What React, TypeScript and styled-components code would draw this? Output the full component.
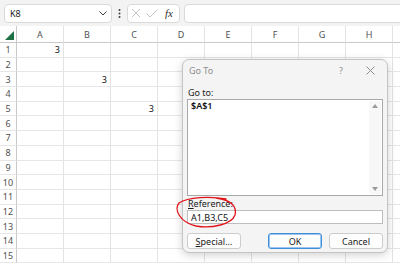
import React from 'react'
import styled, { createGlobalStyle, css } from 'styled-components'

const FONT = `'Noto Sans', 'Open Sans', 'Liberation Sans', sans-serif`
const COLUMNS = ['A', 'B', 'C', 'D', 'E', 'F', 'G', 'H', '']
const ROW_COUNT = 15
const VALUES: Record<string, string> = { '1-0': '3', '3-1': '3', '5-2': '3' }

const GlobalStyle = createGlobalStyle`
  html, body {
    margin: 0;
    padding: 0;
    width: 400px;
    height: 265px;
    overflow: hidden;
    background: #ffffff;
  }
  * {
    box-sizing: border-box;
  }
`

const Window = styled.div`
  position: relative;
  width: 400px;
  height: 265px;
  overflow: hidden;
  display: flex;
  flex-direction: column;
  font-family: ${FONT};
  background: #ffffff;
`

const Toolbar = styled.div`
  height: 26px;
  flex: none;
  display: flex;
  align-items: center;
  padding-left: 4px;
  background: #f3f3f3;
`

const boxLook = css`
  height: 19px;
  background: #ffffff;
  border: 1px solid #dadada;
  border-radius: 4px;
`

const NameBox = styled.div`
  ${boxLook};
  width: 108px;
  display: flex;
  align-items: center;
  justify-content: space-between;
  padding: 0 4px 0 5px;
  font-size: 9px;
  color: #202020;
`

const Dots = styled.div`
  width: 15px;
  display: flex;
  justify-content: center;
`

const FxGroup = styled.div`
  ${boxLook};
  width: 53px;
  display: flex;
  align-items: center;
  gap: 5px;
  padding-left: 3px;
`

const Fx = styled.span`
  font-family: 'Liberation Serif', 'DejaVu Serif', serif;
  font-style: italic;
  font-size: 11px;
  color: #303030;
  margin-left: 2px;
`

const FormulaInput = styled.div`
  ${boxLook};
  flex: 1;
  margin-left: 4px;
  margin-right: -6px;
`

const Sheet = styled.div`
  display: grid;
  grid-template-columns: 17px repeat(9, 47px);
  grid-template-rows: 17px;
  grid-auto-rows: 14.7px;
`

const HeaderCell = styled.div<{ $corner?: boolean }>`
  display: flex;
  align-items: center;
  justify-content: center;
  font-size: 9px;
  color: #505050;
  background: #ffffff;
  border-bottom: 1px solid #c9c9c9;
  border-right: 1px solid ${(p) => (p.$corner ? '#c9c9c9' : '#e3e3e3')};
`

const RowHead = styled.div`
  display: flex;
  align-items: center;
  justify-content: center;
  font-size: 9px;
  color: #505050;
  border-right: 1px solid #c9c9c9;
  border-bottom: 1px solid #e6e6e6;
`

const Cell = styled.div`
  display: flex;
  align-items: center;
  justify-content: flex-end;
  padding-right: 3px;
  font-size: 9px;
  color: #111111;
  border-right: 1px solid #e3e3e3;
  border-bottom: 1px solid #e6e6e6;
`

const Dialog = styled.div`
  position: absolute;
  left: 182px;
  top: 59px;
  width: 206px;
  height: 194px;
  background: #f4f4f4;
  border: 1px solid #c4c4c4;
  border-radius: 7px;
  box-shadow: 0 2px 8px rgba(0, 0, 0, 0.18);
  display: flex;
  flex-direction: column;
  padding: 0 4px;
`

const TitleBar = styled.div`
  height: 21px;
  display: flex;
  align-items: center;
  padding-left: 2px;
  font-size: 9px;
  color: #8c8c8c;
`

const Title = styled.span`
  flex: 1;
`

const Help = styled.span`
  width: 18px;
  text-align: center;
  margin-right: 16px;
`

const Label = styled.div<{ $gap: number }>`
  font-size: 9px;
  color: #1b1b1b;
  height: 12px;
  line-height: 12px;
  padding-left: 1px;
  margin-top: ${(p) => p.$gap}px;
`

const ListBox = styled.div`
  height: 97px;
  background: #ffffff;
  border: 1px solid #a9a9a9;
  display: flex;
  padding: 1px 1px 1px 3px;
  font-size: 9px;
  color: #111111;
`

const ListText = styled.div`
  flex: 1;
  font-weight: 600;
  line-height: 10px;
`

const ScrollTrack = styled.div`
  width: 12px;
  display: flex;
  flex-direction: column;
  justify-content: space-between;
  align-items: center;
  padding: 3px 0;
  background: #f7f7f7;
`

const Arrow = styled.div<{ $down?: boolean }>`
  width: 0;
  height: 0;
  border-left: 3px solid transparent;
  border-right: 3px solid transparent;
  ${(p) =>
    p.$down
      ? 'border-top: 4px solid #9a9a9a;'
      : 'border-bottom: 4px solid #9a9a9a;'}
`

const TextInput = styled.div`
  height: 14px;
  background: #ffffff;
  border: 1px solid #bdbdbd;
  display: flex;
  align-items: center;
  padding-left: 3px;
  font-size: 9px;
  color: #111111;
`

const ButtonRow = styled.div`
  margin-top: 9px;
  display: flex;
  gap: 7px;
`

const Button = styled.div<{ $primary?: boolean; $push?: boolean }>`
  width: 54px;
  height: 16px;
  display: flex;
  align-items: center;
  justify-content: center;
  font-size: 9px;
  color: #1b1b1b;
  background: #fdfdfd;
  border: 1px solid ${(p) => (p.$primary ? '#3f8fd8' : '#cdcdcd')};
  box-shadow: ${(p) => (p.$primary ? 'inset 0 0 0 1px #9cc6ee' : 'none')};
  border-radius: 3px;
  margin-left: ${(p) => (p.$push ? '20px' : '0')};
`

const Underlined = styled.span`
  text-decoration: underline;
  text-underline-offset: 1px;
`

const Scribble = styled.svg`
  position: absolute;
  left: 174px;
  top: 194px;
  width: 66px;
  height: 36px;
  overflow: visible;
`

const Chevron = () => (
  <svg width='8' height='5' viewBox='0 0 8 5'>
    <path d='M0.5 0.5 L4 4 L7.5 0.5' fill='none' stroke='#404040' strokeWidth='1' />
  </svg>
)

const App = () => {
  const rows = Array.from({ length: ROW_COUNT }, (_, i) => i + 1)

  return (
    <Window>
      <GlobalStyle />
      <Toolbar>
        <NameBox>
          <span>K8</span>
          <Chevron />
        </NameBox>
        <Dots>
          <svg width='3' height='9' viewBox='0 0 3 9'>
            <circle cx='1.5' cy='1' r='1' fill='#404040' />
            <circle cx='1.5' cy='4.5' r='1' fill='#404040' />
            <circle cx='1.5' cy='8' r='1' fill='#404040' />
          </svg>
        </Dots>
        <FxGroup>
          <svg width='10' height='10' viewBox='0 0 10 10'>
            <path d='M1 1 L9 9 M9 1 L1 9' stroke='#c4c4c4' strokeWidth='1' />
          </svg>
          <svg width='12' height='9' viewBox='0 0 12 9'>
            <path d='M0.5 4.5 L4 8 L11.5 0.5' fill='none' stroke='#c4c4c4' strokeWidth='1' />
          </svg>
          <Fx>fx</Fx>
        </FxGroup>
        <FormulaInput />
      </Toolbar>

      <Sheet>
        <HeaderCell $corner>
          <svg width='11' height='11' viewBox='0 0 11 11' style={{ marginLeft: 2, marginTop: 3 }}>
            <path d='M10 1 L10 10 L1 10 Z' fill='#1e7145' />
          </svg>
        </HeaderCell>
        {COLUMNS.map((c, i) => (
          <HeaderCell key={'h-' + i}>{c}</HeaderCell>
        ))}
        {rows.map((r) => (
          <React.Fragment key={'r-' + r}>
            <RowHead>{r}</RowHead>
            {COLUMNS.map((_, ci) => (
              <Cell key={`c-${r}-${ci}`}>{VALUES[`${r}-${ci}`] || ''}</Cell>
            ))}
          </React.Fragment>
        ))}
      </Sheet>

      <Dialog>
        <TitleBar>
          <Title>Go To</Title>
          <Help>?</Help>
          <svg width='9' height='9' viewBox='0 0 9 9' style={{ marginRight: 8 }}>
            <path d='M0.5 0.5 L8.5 8.5 M8.5 0.5 L0.5 8.5' stroke='#8c8c8c' strokeWidth='1' />
          </svg>
        </TitleBar>
        <Label $gap={6}>Go to:</Label>
        <ListBox>
          <ListText>$A$1</ListText>
          <ScrollTrack>
            <Arrow />
            <Arrow $down />
          </ScrollTrack>
        </ListBox>
        <Label $gap={2}>
          <Underlined>R</Underlined>eference:
        </Label>
        <TextInput>A1,B3,C5</TextInput>
        <ButtonRow>
          <Button>
            <Underlined>S</Underlined>pecial...
          </Button>
          <Button $primary $push>
            OK
          </Button>
          <Button>Cancel</Button>
        </ButtonRow>
      </Dialog>

      <Scribble viewBox='174 194 66 36'>
        <path
          d='M226 199 C210 196, 188 197, 179 203 C174 209, 179 222, 196 226 C212 229, 232 224, 235 215 C237 207, 232 200, 216 198'
          fill='none'
          stroke='#e2141b'
          strokeWidth='1.3'
          strokeLinecap='round'
        />
      </Scribble>
    </Window>
  )
}

export default App
